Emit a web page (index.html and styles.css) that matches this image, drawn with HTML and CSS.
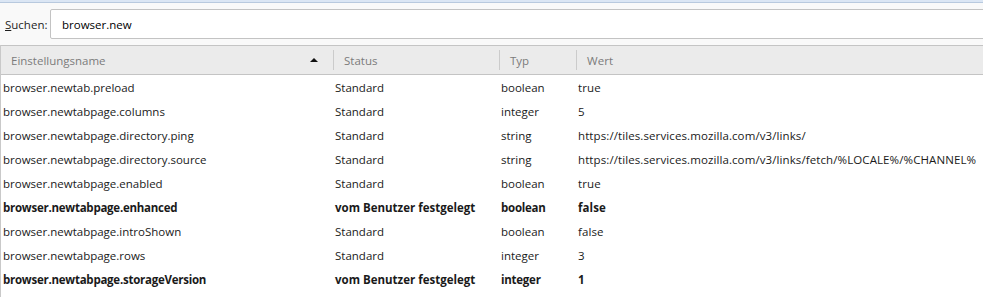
FILE: index.html
```html
<!DOCTYPE html>
<html lang="de">
<head>
  <meta charset="UTF-8">
  <title>about:config</title>
  <link rel="stylesheet" href="styles.css">
</head>
<body>
  <div class="topline"></div>

  <div class="search-row">
    <label for="search"><u>S</u>uchen:</label>
    <input type="text" id="search" value="browser.new">
  </div>

  <div class="prefs">
    <div class="head">
      <div class="hcell col-name"><span>Einstellungsname</span><i class="sort"></i></div>
      <div class="hcell col-status"><span>Status</span></div>
      <div class="hcell col-type"><span>Typ</span></div>
      <div class="hcell col-value"><span>Wert</span></div>
    </div>

    <div class="row">
      <div class="col-name">browser.newtab.preload</div>
      <div class="col-status">Standard</div>
      <div class="col-type">boolean</div>
      <div class="col-value">true</div>
    </div>
    <div class="row">
      <div class="col-name">browser.newtabpage.columns</div>
      <div class="col-status">Standard</div>
      <div class="col-type">integer</div>
      <div class="col-value">5</div>
    </div>
    <div class="row">
      <div class="col-name">browser.newtabpage.directory.ping</div>
      <div class="col-status">Standard</div>
      <div class="col-type">string</div>
      <div class="col-value">https://tiles.services.mozilla.com/v3/links/</div>
    </div>
    <div class="row">
      <div class="col-name">browser.newtabpage.directory.source</div>
      <div class="col-status">Standard</div>
      <div class="col-type">string</div>
      <div class="col-value">https://tiles.services.mozilla.com/v3/links/fetch/%LOCALE%/%CHANNEL%</div>
    </div>
    <div class="row">
      <div class="col-name">browser.newtabpage.enabled</div>
      <div class="col-status">Standard</div>
      <div class="col-type">boolean</div>
      <div class="col-value">true</div>
    </div>
    <div class="row user">
      <div class="col-name">browser.newtabpage.enhanced</div>
      <div class="col-status">vom Benutzer festgelegt</div>
      <div class="col-type">boolean</div>
      <div class="col-value">false</div>
    </div>
    <div class="row">
      <div class="col-name">browser.newtabpage.introShown</div>
      <div class="col-status">Standard</div>
      <div class="col-type">boolean</div>
      <div class="col-value">false</div>
    </div>
    <div class="row">
      <div class="col-name">browser.newtabpage.rows</div>
      <div class="col-status">Standard</div>
      <div class="col-type">integer</div>
      <div class="col-value">3</div>
    </div>
    <div class="row user">
      <div class="col-name">browser.newtabpage.storageVersion</div>
      <div class="col-status">vom Benutzer festgelegt</div>
      <div class="col-type">integer</div>
      <div class="col-value">1</div>
    </div>
  </div>
</body>
</html>
```

FILE: styles.css
```css
body {
  margin: 0;
  background-color: #f9f9f9;
  font-family: 'Open Sans', 'Liberation Sans', sans-serif;
  font-size: 11.5px;
  color: #1a1a1a;
  overflow: hidden;
}

.topline {
  height: 2px;
  background-color: #dbe6f4;
  border-bottom: 1px solid #b8c9de;
}

.search-row {
  display: flex;
  align-items: center;
  margin-top: 6px;
  padding-left: 5px;
}

.search-row label {
  width: 45px;
  color: #1e1e1e;
}

.search-row input {
  flex: 1;
  height: 30px;
  box-sizing: border-box;
  margin-right: -4px;
  padding: 0 11px;
  border: 1px solid #c3c3c3;
  border-radius: 2px 0 0 2px;
  background-color: #fff;
  font-family: inherit;
  font-size: 11.5px;
  color: #000;
  outline: none;
}

.prefs {
  margin-top: 6px;
  border-left: 1px solid #c9c9c9;
  background-color: #fff;
  min-height: 260px;
}

.head {
  display: flex;
  height: 28px;
  background-color: #ebebeb;
  border-top: 1px solid #c4c4c4;
  border-bottom: 1px solid #c4c4c4;
  color: #7b7b7b;
}

.hcell {
  display: flex;
  align-items: center;
  padding: 4px 0;
  box-sizing: border-box;
}

.hcell span {
  flex: 1;
  display: flex;
  align-items: center;
  height: 100%;
  padding-left: 10px;
}

.hcell + .hcell span {
  border-left: 1px solid #cbcbcb;
}

.col-name {
  width: 332px;
}

.col-status {
  width: 166px;
}

.col-type {
  width: 77px;
}

.col-value {
  flex: 1;
  white-space: nowrap;
  letter-spacing: 0.1px;
}

.sort {
  width: 0;
  height: 0;
  margin-right: 15px;
  border-left: 4px solid transparent;
  border-right: 4px solid transparent;
  border-bottom: 4px solid #111;
}

.row {
  display: flex;
  align-items: center;
  height: 24px;
}

.row > div {
  padding-left: 2px;
  box-sizing: border-box;
}

.row.user {
  font-weight: bold;
  letter-spacing: -0.25px;
}

.row.user .col-status {
  letter-spacing: 0;
}
```
